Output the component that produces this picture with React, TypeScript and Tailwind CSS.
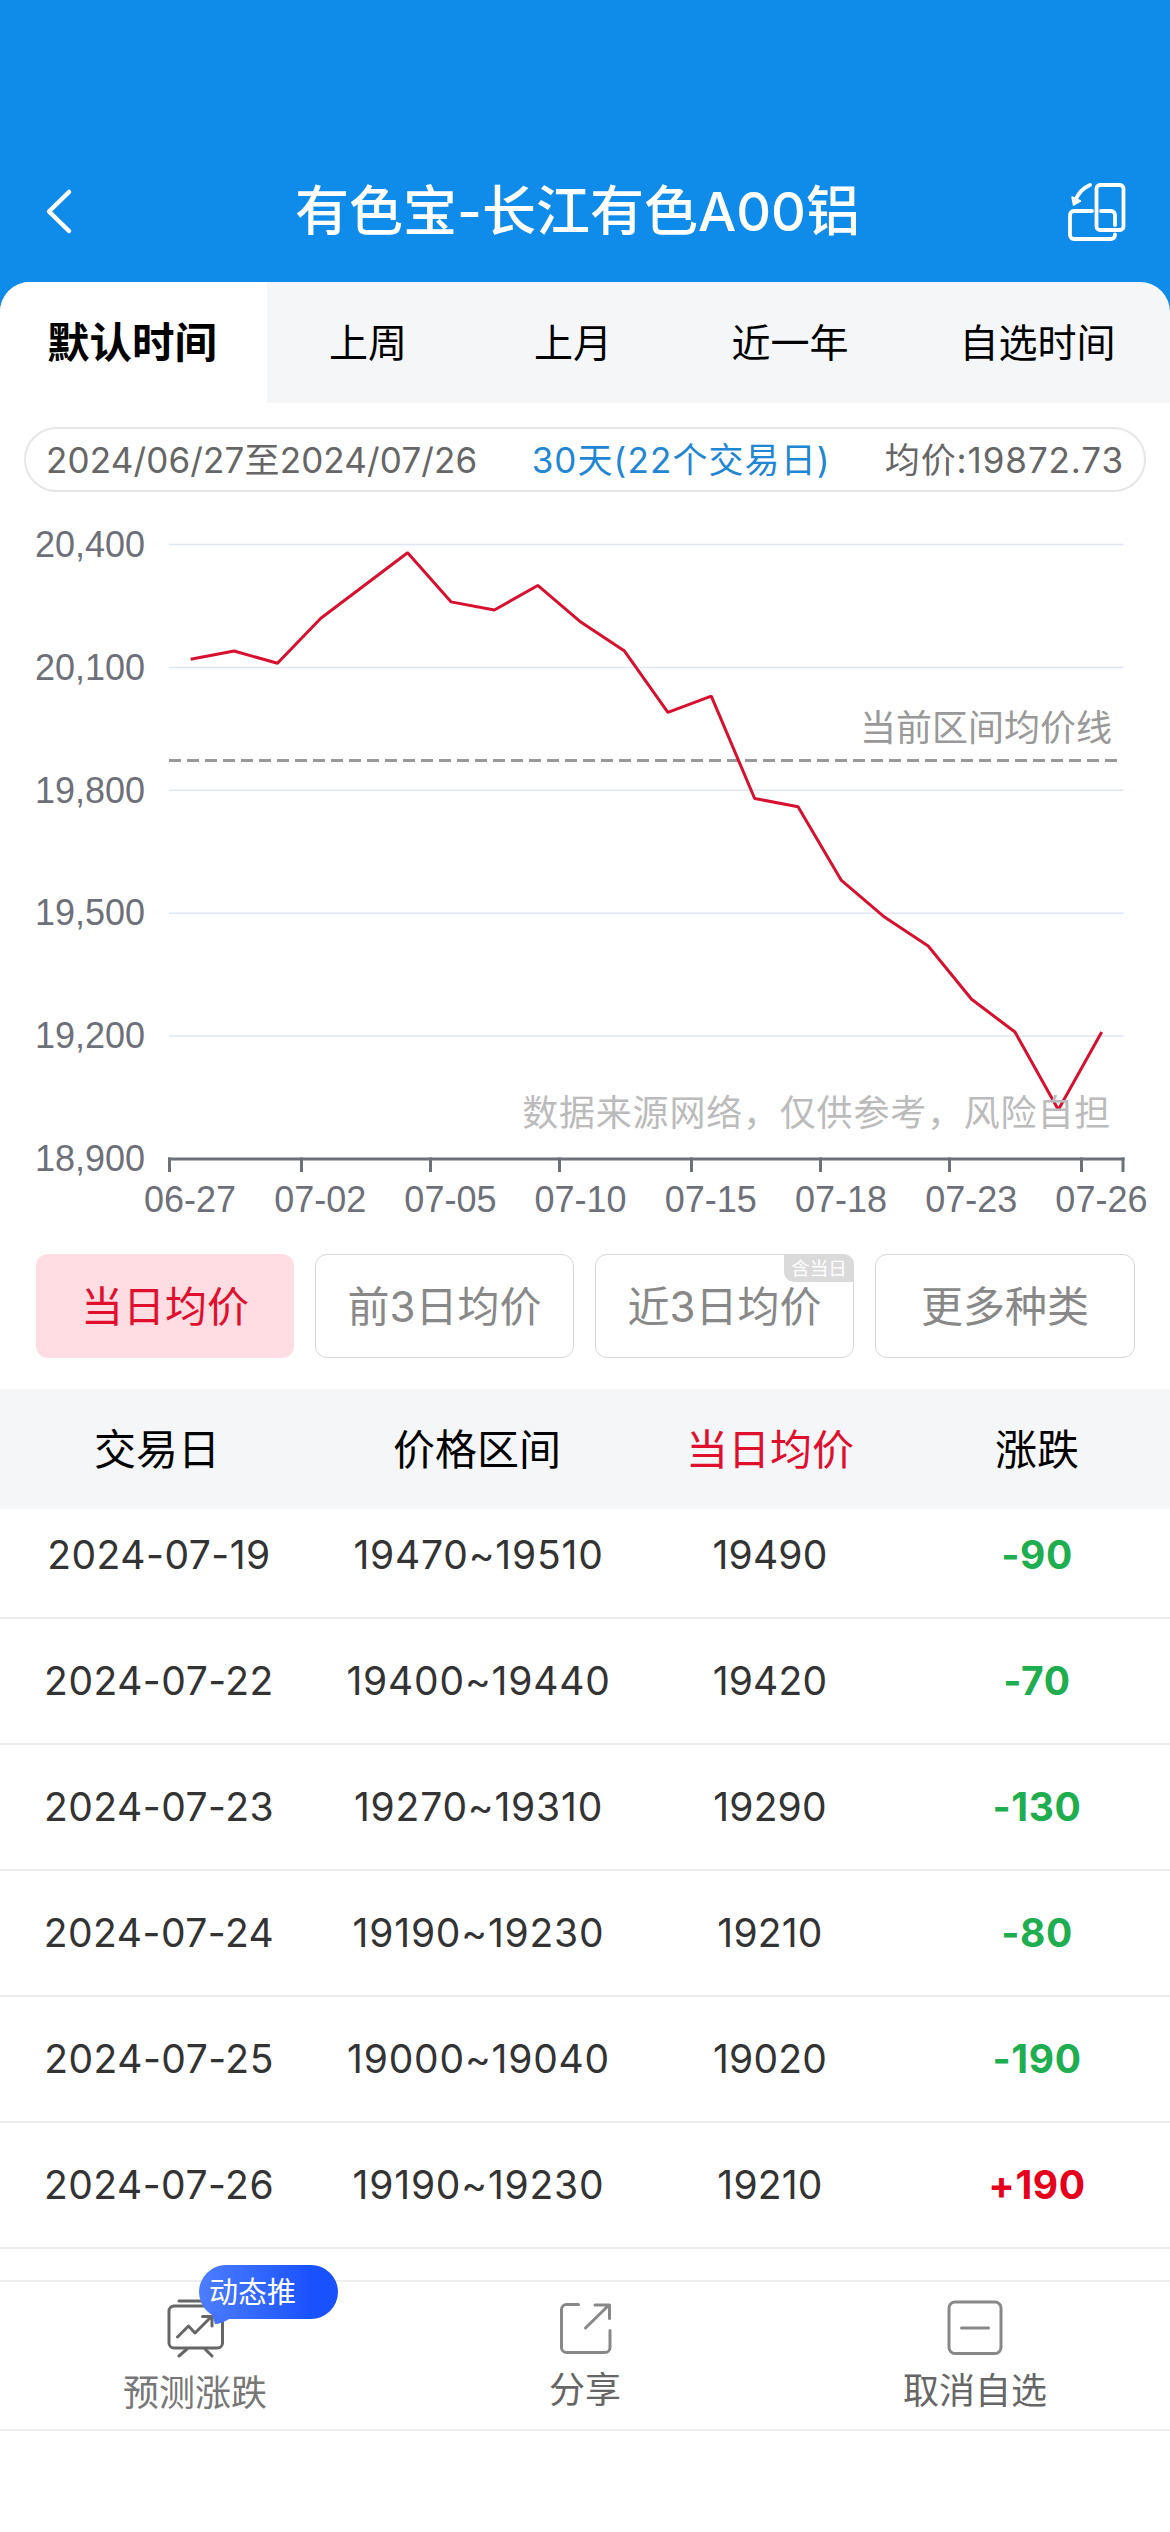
import React from "react";

const CJK = "font-['Inter','Noto_Sans_CJK_SC',sans-serif]";

const tabs = [
  { label: "默认时间", className: "w-[267px] bg-white pr-[3px] text-[42.5px] font-bold" },
  { label: "上周", className: "w-[202px]" },
  { label: "上月", className: "w-[206px] pl-[2px]" },
  { label: "近一年", className: "w-[230px]" },
  { label: "自选时间", className: "w-[265px]" },
];

const prices = [
  20120, 20140, 20110, 20220, 20300, 20380, 20260, 20240, 20300, 20210, 20140,
  19990, 20030, 19780, 19760, 19580, 19490, 19420, 19290, 19210, 19020, 19210,
];

const yTicks = [20400, 20100, 19800, 19500, 19200, 18900];

const xLabels = ["06-27", "07-02", "07-05", "07-10", "07-15", "07-18", "07-23", "07-26"];
const xTicks = [169.5, 301.5, 430.5, 559.5, 691.5, 820.5, 949.5, 1081.5, 1123];

const rows = [
  { date: "2024-07-19", range: "19470~19510", avg: "19490", change: -90 },
  { date: "2024-07-22", range: "19400~19440", avg: "19420", change: -70 },
  { date: "2024-07-23", range: "19270~19310", avg: "19290", change: -130 },
  { date: "2024-07-24", range: "19190~19230", avg: "19210", change: -80 },
  { date: "2024-07-25", range: "19000~19040", avg: "19020", change: -190 },
  { date: "2024-07-26", range: "19190~19230", avg: "19210", change: 190 },
];

export default function App() {
  return (
    <div className={`${CJK} flex h-[2532px] w-[1170px] flex-col overflow-hidden bg-white text-black`}>
      <Header />
      <div className="h-[121px] bg-[#0f8ce9]">
        <Tabs />
      </div>
      <SummaryPill />
      <PriceChart />
      <AverageButtons />
      <PriceTable />
      <BottomBar />
    </div>
  );
}

function Header() {
  return (
    <header className="h-[282px] bg-[#0f8ce9] pt-[160px]">
      <div className="flex h-[102px] items-center justify-between pl-[40px] pr-[43px] text-white">
        <svg width="36" height="48" viewBox="0 0 36 48" fill="none" stroke="currentColor" strokeWidth="4.5" strokeLinecap="round" strokeLinejoin="round">
          <path d="M29 5 9 24.5 29 44" />
        </svg>
        <h1 className="pl-[12px] pt-[2px] text-[54px] font-medium leading-none">有色宝-长江有色A00铝</h1>
        <RotateIcon />
      </div>
    </header>
  );
}

function RotateIcon() {
  return (
    <svg width="60" height="60" viewBox="0 0 60 60" fill="none" stroke="currentColor" strokeWidth="3.8" strokeLinecap="round" strokeLinejoin="round">
      <rect x="29.500" y="4" width="27" height="45" rx="3.500" />
      <path d="M25 30H7a4 4 0 0 0-4 4v20a4 4 0 0 0 4 4h37a4 4 0 0 0 4-4v-.5M34 30h10a4 4 0 0 1 4 4v10" />
      <path d="M23 4C16 7 11 13 8.500 19" />
      <path d="m5 16 1.500 8 7-4z" fill="currentColor" strokeWidth="1.500" />
    </svg>
  );
}

function Tabs() {
  return (
    <nav className="flex h-[121px] overflow-hidden rounded-t-[30px] bg-[#f4f6f8] text-[39px]">
      {tabs.map((tab) => (
        <button key={tab.label} type="button" className={`${tab.className} pt-px`}>
          {tab.label}
        </button>
      ))}
    </nav>
  );
}

function SummaryPill() {
  return (
    <div className="mx-[24px] mt-[24px] flex h-[65px] items-center justify-between rounded-full border-2 border-[#e6e6e8] px-[20px] pt-[2px] text-[35px] text-[#666]">
      <span className="tracking-[0.15px]">2024/06/27至2024/07/26</span>
      <span className="tracking-[1.1px] text-[#2186d3]">30天(22个交易日)</span>
      <span className="tracking-[0.9px]">均价:19872.73</span>
    </div>
  );
}

function PriceChart() {
  const left = 169;
  const step = 954.4 / prices.length;
  const toY = (price: number) => 52.5 + ((20400 - price) / 300) * 122.9;
  const points = prices
    .map((price, i) => `${left + step * (i + 0.5)},${toY(price)}`)
    .join(" ");

  return (
    <svg width="1170" height="762" viewBox="0 0 1170 762" className="shrink-0">
      {yTicks.map((tick) => (
        <g key={tick}>
          {tick !== 18900 && (
            <line x1="169" x2="1123.500" y1={toY(tick)} y2={toY(tick)} stroke="#e0e6f1" strokeWidth="1.500" />
          )}
          <text x="145" y={toY(tick) + 12.2} textAnchor="end" className="fill-[#6e7079] font-['Liberation_Sans',sans-serif] text-[36px]">
            {tick.toLocaleString("en-US")}
          </text>
        </g>
      ))}

      <g stroke="#6e7079" strokeWidth="3">
        <line x1="168" x2="1124.500" y1="667" y2="667" />
        {xTicks.map((x) => (
          <line key={x} x1={x} x2={x} y1="665.500" y2="680" />
        ))}
      </g>
      {xLabels.map((label, i) => (
        <text key={label} x={190 + i * 130.2} y="720" textAnchor="middle" className="fill-[#6e7079] font-['Liberation_Sans',sans-serif] text-[36px]">
          {label}
        </text>
      ))}

      <line x1="169" x2="1118" y1="268.500" y2="268.500" stroke="#999" strokeWidth="3" strokeDasharray="12 6" />
      <polyline points={points} fill="none" stroke="#d7102f" strokeWidth="3" strokeLinejoin="bevel" />
      <text x="1112" y="248.500" textAnchor="end" className="fill-[#999] text-[36px]">
        当前区间均价线
      </text>
      <text x="1111" y="634" textAnchor="end" className="fill-[#bbb] text-[36px] tracking-[0.8px]">
        数据来源网络，仅供参考，风险自担
      </text>
    </svg>
  );
}

function AverageButtons() {
  const base = "relative h-[104px] rounded-[12px] pt-px text-[42px]";
  const outlined = "border border-[#d8d8d8] text-[#888]";

  return (
    <div className="grid h-[135px] shrink-0 grid-cols-[258px_259px_259px_260px] gap-[21px] pl-[36px]">
      <button type="button" className={`${base} bg-[#ffdde3] text-[#df0f2d]`}>当日均价</button>
      <button type="button" className={`${base} ${outlined}`}>前3日均价</button>
      <button type="button" className={`${base} ${outlined}`}>
        近3日均价
        <span className="absolute -right-px -top-px flex h-[28px] w-[70px] items-center justify-center rounded-bl-[10px] rounded-tr-[10px] bg-[#dadada] text-[18.5px] leading-none text-white">
          含当日
        </span>
      </button>
      <button type="button" className={`${base} ${outlined}`}>更多种类</button>
    </div>
  );
}

function PriceTable() {
  const columns = "grid grid-cols-[318px_318px_268px_266px] items-center text-center";

  return (
    <section className="h-[891px] shrink-0">
      <div className={`${columns} h-[120px] bg-[#f4f6f8] pt-px text-[42px]`}>
        <span className="pr-[4px]">交易日</span>
        <span>价格区间</span>
        <span className="text-[#df0f2d]">当日均价</span>
        <span>涨跌</span>
      </div>
      {rows.map((row, i) => (
        <div
          key={row.date}
          className={`${columns} border-b-2 border-[#ececec] text-[39px] text-[#333] ${
            i === 0 ? "h-[110px] pb-[15px]" : "h-[126px] pt-px"
          }`}
        >
          <span className="tracking-[0.5px]">{row.date}</span>
          <span className="pl-[3px] tracking-[0.8px]">{row.range}</span>
          <span className="tracking-[0.2px]">{row.avg}</span>
          <span className={`font-bold tracking-[0.6px] ${row.change > 0 ? "text-[#e6001b]" : "text-[#1ead4f]"}`}>
            {row.change > 0 ? `+${row.change}` : row.change}
          </span>
        </div>
      ))}
    </section>
  );
}

function BottomBar() {
  return (
    <footer className="grid h-[151px] shrink-0 grid-cols-3 border-y-2 border-[#eee] text-[36px] text-[#666]">
      <div className="relative flex flex-col items-center pt-[14px]">
        <svg width="60" height="62" viewBox="0 0 60 62" fill="none" stroke="#666" strokeWidth="3" strokeLinecap="round" strokeLinejoin="round">
          <rect x="4" y="10" width="53.500" height="42" rx="5" />
          <path d="M14 5h34M22 53l-8 7M40 53l7 7M12.500 41l11-11 6.500 7L46 21M37.500 20.500H47V30" />
        </svg>
        <span className="mt-[10px] text-[#777] leading-[50px]">预测涨跌</span>
        <DynamicBadge />
      </div>
      <div className="flex flex-col items-center pt-[14px]">
        <svg width="60" height="60" viewBox="0 0 60 60" fill="none" stroke="#888" strokeWidth="3" strokeLinecap="round" strokeLinejoin="round">
          <path d="M23.500 8.500h-12a5 5 0 0 0-5 5v38a5 5 0 0 0 5 5H50a5 5 0 0 0 5-5V34.500M30.500 32 54 9M40 9h14.500v13.500" />
        </svg>
        <span className="mt-[9px] leading-[50px]">分享</span>
      </div>
      <div className="flex flex-col items-center pt-[14px]">
        <svg width="60" height="60" viewBox="0 0 60 60" fill="none" stroke="#888" strokeWidth="3" strokeLinecap="round">
          <rect x="4" y="6" width="52" height="51.500" rx="6" />
          <path d="M16.500 32h27" />
        </svg>
        <span className="mt-[10px] leading-[50px]">取消自选</span>
      </div>
    </footer>
  );
}

function DynamicBadge() {
  return (
    <div className="absolute left-[199px] top-[-17px] h-[54px] w-[139px] rounded-full bg-linear-to-r from-[#4d7dff] to-[#1a51ff] to-80% pl-[10px] text-[29px] leading-[55px] text-white">
      动态推
      <svg width="20" height="14" viewBox="0 0 20 14" className="absolute left-[12px] top-[46px]">
        <path d="M0 0 4 13q6 0 16-6z" fill="#4474ff" />
      </svg>
    </div>
  );
}
